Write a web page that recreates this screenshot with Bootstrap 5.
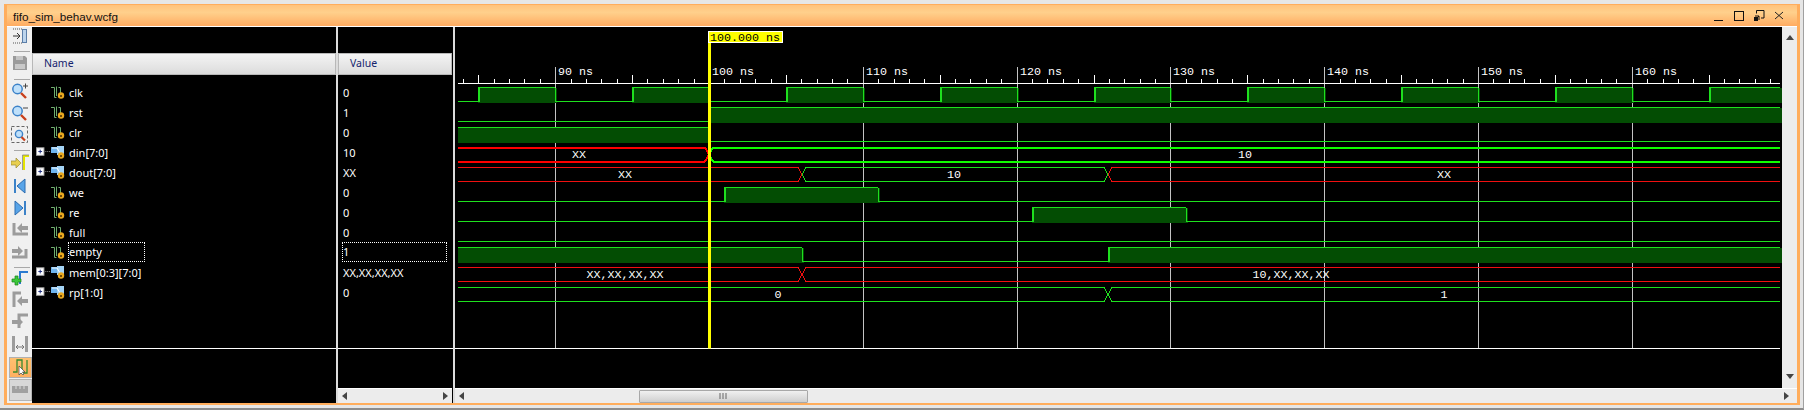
<!DOCTYPE html>
<html lang="en">

<head>
  <meta charset="UTF-8">
  <title>fifo_sim_behav.wcfg</title>
  <link href="https://cdn.jsdelivr.net/npm/bootstrap@5.3.3/dist/css/bootstrap.min.css" rel="stylesheet">
  <style>
    body { background: #e6e6e6; height: 410px; overflow: hidden; padding: 4px 3px 3px 4px; font: 11px "Noto Sans", "Liberation Sans", sans-serif; border-right: 1px solid #a0a0a0; border-bottom: 2px solid #8c8c8c; }
    .tool-win { height: 401px; border: solid #ffad5c; border-width: 1px 3px 2px 3px; }
    .title-bar { height: 21px; padding: 1px 12px 0 6px; color: #111; font: 11.7px "Liberation Sans", sans-serif; border-bottom: 1px solid #fff; background: linear-gradient(#ffc27c, #ffd08c 35%, #ffac62); box-sizing: content-box; }
    .title-ctl { gap: 8px; }
    .main-area { height: 376px; }
    .side-tools { width: 25px; background: #f0f0f0; }
    .tool-btn { height: 22.3px; }
    .tool-btn.short { height: 20px; }
    .tool-btn svg { display: block; margin: auto; }
    .tool-sep { height: 4px; padding-top: 1px; }
    .tool-sep.wide { height: 6px; padding-top: 2px; }
    .tool-sep::before { content: ""; display: block; margin: 0 2px 0 7px; height: 1px; background: #a8a8a8; }
    .tool-on { height: 21px; margin: 0 0 1px 2px; background: linear-gradient(#ffc070, #ffb060); border: 1px solid #b0b0b0; }
    .tool-off { height: 22px; margin-left: 2px; background: #d8d8d8; border: 1px solid #b4b4b4; }
    .name-col { width: 304px; background: #000; }
    .value-col { width: 115px; background: #000; }
    .split-bar { width: 2px; background: #dcdcdc; }
    .top-gap { height: 26px; }
    .head-cell { height: 22px; padding-bottom: 2px; background: linear-gradient(#f4f4f4, #dcdcdc); border: 1px solid #b8b8b8; color: #14246e; font-size: 10.5px; }
    .name-col .head-cell { padding-left: 11px; }
    .value-col .head-cell { padding-left: 11px; margin-right: 1px; }
    .rows-box { height: 274px; padding-top: 7px; border-bottom: 1px solid #fff; color: #fff; }
    .sig-row { height: 20px; }
    .name-col .sig-row { padding-left: 4px; }
    .value-col .sig-row { padding-left: 5px; }
    .tree-gap { width: 15px; }
    .sig-focus { border: 1px dotted #fff; height: 20px; line-height: 18px; }
    .name-col .sig-focus { width: 77px; margin-left: -1px; }
    .value-col .sig-focus { width: 105px; margin-left: -1px; padding-left: 0; }
    .wave-box { width: 1327px; height: 361px; background: #000; }
    .wave-box svg { display: block; }
    .v-scroll { width: 15px; background: #ececec; }
    .h-scroll { height: 15px; background: #ececec; border-top: 1px solid #fff; }
    .value-scroll { margin-top: auto; margin-right: 1px; }
    .scroll-thumb { width: 169px; height: 13px; margin-left: 174px; border: 1px solid #a8a8a8; border-radius: 1px; background: linear-gradient(#f0f0f0, #cfcfcf); }
    .wave-text { font: 11.67px "Liberation Mono", monospace; fill: #fff; }
  </style>
</head>

<body>
  <!-- iconos -->
  <svg width="0" height="0" class="d-block">
    <defs>
      <symbol id="ic-bit" viewBox="0 0 14 14">
        <path d="M0 2.500H3.500V12.500H5.500M5.500 1.500V11M7.500 2.500H9.500V8" fill="none" stroke="#6fae6f"/>
        <circle cx="10" cy="10.500" r="3.200" fill="#e8a820"/>
        <rect x="9" y="10" width="2" height="2" fill="#6b4a08"/>
      </symbol>
      <symbol id="ic-bus" viewBox="0 0 14 14">
        <rect x="0" y="2" width="6" height="6" fill="#6fb4ee"/>
        <rect x="6" y="1" width="7" height="9" fill="#a4d4f6"/>
        <path d="M1 3H6L9 8" stroke="#fff" fill="none"/>
        <circle cx="10" cy="10.500" r="3.200" fill="#e8a820"/>
        <rect x="9" y="10" width="2" height="2" fill="#6b4a08"/>
      </symbol>
      <symbol id="ic-plus" viewBox="0 0 16 10">
        <rect x=".5" y=".5" width="8" height="8" fill="#fff" stroke="#a4a4a4"/>
        <path d="M2.500 4.500H6.500M4.500 2.500V6.500" stroke="#1a2a7a"/>
        <path d="M10 4.500H16" stroke="#999" stroke-dasharray="1 1"/>
      </symbol>
    </defs>
  </svg>

  <div class="tool-win d-flex flex-column">
    <div class="title-bar d-flex align-items-center justify-content-between">
      <span>fifo_sim_behav.wcfg</span>
      <div class="title-ctl d-flex align-items-center">
        <svg width="12" height="12" viewBox="0 0 12 12"><path d="M1 10.500H10" stroke="#111" stroke-width="1"/></svg>
        <svg width="12" height="12" viewBox="0 0 12 12"><rect x="1.500" y="1.500" width="9" height="9" fill="none" stroke="#111"/></svg>
        <svg width="12" height="12" viewBox="0 0 12 12"><path d="M3.500 3.500V.5H11V8H8M1 11L6 6M2 6H6V10" fill="none" stroke="#111"/><rect x="1" y="7" width="4" height="4" fill="#111"/></svg>
        <svg width="12" height="12" viewBox="0 0 12 12"><path d="M2 2L10 9M10 2L2 9" stroke="#222"/></svg>
      </div>
    </div>

    <div class="main-area d-flex">
      <!-- barra de herramientas -->
      <div class="side-tools d-flex flex-column">
        <div class="tool-btn"><svg width="16" height="18" viewBox="0 0 16 18"><path d="M1 2H10M1 16H10" stroke="#555" stroke-dasharray="1 1"/><path d="M1 9H7M5 6L8 9L5 12" stroke="#333" fill="none"/><rect x="10.500" y="2.500" width="4" height="13" fill="#bcd4ec" stroke="#5b7ea8"/></svg></div>
        <div class="tool-sep wide"></div>
        <div class="tool-btn"><svg width="16" height="16" viewBox="0 0 16 16"><path d="M1 1H13L15 3V15H1Z" fill="#9a9a9a"/><rect x="4" y="1" width="7" height="4" fill="#c4c4c4"/><rect x="3" y="9" width="10" height="5" fill="#c8c8c8"/></svg></div>
        <div class="tool-sep"></div>
        <div class="tool-btn"><svg width="18" height="18" viewBox="0 0 18 18"><circle cx="6.500" cy="7" r="4.700" fill="#bfe0fa" stroke="#3c82c8" stroke-width="1.500"/><path d="M10 11L15 16" stroke="#c8401c" stroke-width="2.400"/><path d="M12 4H17M14.500 1.500V6.500" stroke="#444"/></svg></div>
        <div class="tool-btn"><svg width="18" height="18" viewBox="0 0 18 18"><circle cx="6.500" cy="7" r="4.700" fill="#bfe0fa" stroke="#3c82c8" stroke-width="1.500"/><path d="M10 11L15 16" stroke="#c8401c" stroke-width="2.400"/><path d="M12 4H17" stroke="#444"/></svg></div>
        <div class="tool-btn"><svg width="18" height="18" viewBox="0 0 18 18"><rect x=".5" y=".5" width="16" height="16" fill="none" stroke="#666" stroke-dasharray="3 2"/><circle cx="8" cy="8" r="3.600" fill="#bfe0fa" stroke="#3c82c8" stroke-width="1.400"/><path d="M10.500 11L14 14.500" stroke="#c8401c" stroke-width="2.200"/></svg></div>
        <div class="tool-sep wide"></div>
        <div class="tool-btn"><svg width="18" height="18" viewBox="0 0 18 18"><path d="M0 7H5V4L10 9L5 14V11H0Z" fill="#e8cf50" stroke="#9a8a30" stroke-width=".7"/><path d="M13 16V2H18" fill="none" stroke="#e4e400" stroke-width="2"/><path d="M11.500 16V1H18" fill="none" stroke="#777" stroke-width=".7"/></svg></div>
        <div class="tool-btn"><svg width="14" height="18" viewBox="0 0 14 18"><rect x="1" y="2" width="2" height="14" fill="#3c82c8"/><path d="M12 2V16L4 9Z" fill="#58a4e8" stroke="#2c6cb0"/></svg></div>
        <div class="tool-btn"><svg width="14" height="18" viewBox="0 0 14 18"><rect x="11" y="2" width="2" height="14" fill="#3c82c8"/><path d="M2 2V16L10 9Z" fill="#58a4e8" stroke="#2c6cb0"/></svg></div>
        <div class="tool-btn"><svg width="18" height="16" viewBox="0 0 18 16"><path d="M3 2V13H17" fill="none" stroke="#9c9c9c" stroke-width="3"/><path d="M6 7L11 2V5H17V9H11V12Z" fill="#9c9c9c"/></svg></div>
        <div class="tool-btn"><svg width="18" height="16" viewBox="0 0 18 16"><path d="M15 5V13H1" fill="none" stroke="#9c9c9c" stroke-width="3"/><path d="M12 7L7 2V5H1V9H7V12Z" fill="#9c9c9c"/></svg></div>
        <div class="tool-sep"></div>
        <div class="tool-btn short"><svg width="18" height="18" viewBox="0 0 18 18"><path d="M9 14V2H17" fill="none" stroke="#2a7ad0" stroke-width="2"/><path d="M4 6H7V9H10V12H7V15H4V12H1V9H4Z" fill="#3cc83c" stroke="#148214" stroke-width=".7"/></svg></div>
        <div class="tool-btn"><svg width="18" height="18" viewBox="0 0 18 18"><path d="M3 17V3H10" fill="none" stroke="#9c9c9c" stroke-width="3"/><path d="M6 11L11 6V9H17V13H11V16Z" fill="#9c9c9c"/></svg></div>
        <div class="tool-btn"><svg width="18" height="18" viewBox="0 0 18 18"><path d="M8 16V3H17" fill="none" stroke="#9c9c9c" stroke-width="3"/><path d="M12 10L7 5V8H1V12H7V15Z" fill="#9c9c9c"/></svg></div>
        <div class="tool-btn"><svg width="18" height="18" viewBox="0 0 18 18"><rect x="1" y="1" width="3" height="16" fill="#9c9c9c"/><rect x="14" y="1" width="3" height="16" fill="#9c9c9c"/><path d="M5 12H13M7 10L5 12L7 14M11 10L13 12L11 14" fill="none" stroke="#777"/></svg></div>
        <div class="tool-on d-flex align-items-center justify-content-center"><svg width="18" height="18" viewBox="0 0 18 18"><path d="M1 14H5V2H10V15H15V2" fill="none" stroke="#3a8a30" stroke-width="1.300"/><path d="M7 8V17L9 15L11 17L12 16L10.500 14H13Z" fill="#fff" stroke="#444" stroke-width=".7"/></svg></div>
        <div class="tool-off d-flex align-items-center justify-content-center"><svg width="18" height="10" viewBox="0 0 18 10"><rect y="1" width="16" height="7" fill="#a0a0a0"/><path d="M4 1V4M8 1V4M12 1V4" stroke="#dcdcdc"/></svg></div>
      </div>

      <!-- columna de nombres -->
      <div class="name-col d-flex flex-column">
        <div class="top-gap"></div>
        <div class="head-cell d-flex align-items-center">Name</div>
        <div class="rows-box">
          <div class="sig-row d-flex align-items-center"><span class="tree-gap"></span><svg width="14" height="14" class="me-1"><use href="#ic-bit"/></svg>clk</div>
          <div class="sig-row d-flex align-items-center"><span class="tree-gap"></span><svg width="14" height="14" class="me-1"><use href="#ic-bit"/></svg>rst</div>
          <div class="sig-row d-flex align-items-center"><span class="tree-gap"></span><svg width="14" height="14" class="me-1"><use href="#ic-bit"/></svg>clr</div>
          <div class="sig-row d-flex align-items-center"><svg width="15" height="10"><use href="#ic-plus"/></svg><svg width="14" height="14" class="me-1"><use href="#ic-bus"/></svg>din[7:0]</div>
          <div class="sig-row d-flex align-items-center"><svg width="15" height="10"><use href="#ic-plus"/></svg><svg width="14" height="14" class="me-1"><use href="#ic-bus"/></svg>dout[7:0]</div>
          <div class="sig-row d-flex align-items-center"><span class="tree-gap"></span><svg width="14" height="14" class="me-1"><use href="#ic-bit"/></svg>we</div>
          <div class="sig-row d-flex align-items-center"><span class="tree-gap"></span><svg width="14" height="14" class="me-1"><use href="#ic-bit"/></svg>re</div>
          <div class="sig-row d-flex align-items-center"><span class="tree-gap"></span><svg width="14" height="14" class="me-1"><use href="#ic-bit"/></svg>full</div>
          <div class="sig-row d-flex align-items-center"><span class="tree-gap"></span><svg width="14" height="14" class="me-1"><use href="#ic-bit"/></svg><span class="sig-focus">empty</span></div>
          <div class="sig-row d-flex align-items-center"><svg width="15" height="10"><use href="#ic-plus"/></svg><svg width="14" height="14" class="me-1"><use href="#ic-bus"/></svg>mem[0:3][7:0]</div>
          <div class="sig-row d-flex align-items-center"><svg width="15" height="10"><use href="#ic-plus"/></svg><svg width="14" height="14" class="me-1"><use href="#ic-bus"/></svg>rp[1:0]</div>
        </div>
      </div>
      <div class="split-bar"></div>

      <!-- columna de valores -->
      <div class="value-col d-flex flex-column">
        <div class="top-gap"></div>
        <div class="head-cell d-flex align-items-center">Value</div>
        <div class="rows-box">
          <div class="sig-row d-flex align-items-center">0</div>
          <div class="sig-row d-flex align-items-center">1</div>
          <div class="sig-row d-flex align-items-center">0</div>
          <div class="sig-row d-flex align-items-center">10</div>
          <div class="sig-row d-flex align-items-center">XX</div>
          <div class="sig-row d-flex align-items-center">0</div>
          <div class="sig-row d-flex align-items-center">0</div>
          <div class="sig-row d-flex align-items-center">0</div>
          <div class="sig-row d-flex align-items-center"><span class="sig-focus">1</span></div>
          <div class="sig-row d-flex align-items-center">XX,XX,XX,XX</div>
          <div class="sig-row d-flex align-items-center">0</div>
        </div>
        <div class="h-scroll value-scroll d-flex align-items-center justify-content-between px-1">
          <svg width="6" height="8"><path d="M5 0V8L0 4Z" fill="#444"/></svg>
          <svg width="6" height="8"><path d="M1 0V8L6 4Z" fill="#444"/></svg>
        </div>
      </div>
      <div class="split-bar"></div>

      <!-- ondas -->
      <div class="d-flex flex-column">
        <div class="d-flex">
          <div class="wave-box"><svg id="ondas" width="1327" height="361" viewBox="455 27 1327 361"></svg></div>
          <div class="v-scroll d-flex flex-column justify-content-between align-items-center py-1">
            <svg width="8" height="6" class="mt-1"><path d="M0 5H8L4 0Z" fill="#444"/></svg>
            <svg width="8" height="6" class="mb-1"><path d="M0 0H8L4 5Z" fill="#444"/></svg>
          </div>
        </div>
        <div class="h-scroll d-flex align-items-center px-1">
          <svg width="6" height="8" class="flex-shrink-0"><path d="M5 0V8L0 4Z" fill="#444"/></svg>
          <div class="scroll-thumb d-flex align-items-center justify-content-center flex-shrink-0">
            <svg width="9" height="8"><path d="M1 1V7M4 1V7M7 1V7" stroke="#666"/></svg>
          </div>
          <svg width="6" height="8" class="ms-auto me-1 flex-shrink-0"><path d="M1 0V8L6 4Z" fill="#444"/></svg>
        </div>
      </div>
    </div>
  </div>

  <script>
    const FIN = 1780, INICIO = 458;
    const VERDE = "#1ee01e", ROJO = "#f01010", RELLENO = "#034d03";
    let svg = "";

    function X(t) { return Math.round(709 + (t - 100) * 15.38); }
    function linea(d, color, ancho) {
      svg += `<path d="${d}" stroke="${color}" stroke-width="${ancho || 1}" fill="none" shape-rendering="crispEdges"/>`;
    }
    function texto(x, y, s, extra) {
      svg += `<text class="wave-text" x="${x}" y="${y}" ${extra || 'text-anchor="middle"'}>${s}</text>`;
    }

    // señal de un bit: altos = lista de [x0, x1]
    function bit(fila, altos) {
      const hi = 87 + 20 * fila + .5, lo = hi + 14;
      altos.forEach(a => {
        svg += `<rect x="${a[0]}" y="${hi}" width="${a[1] - a[0] + 2}" height="15.500" fill="${RELLENO}" shape-rendering="crispEdges"/>`;
      });
      let x = INICIO;
      altos.forEach(a => {
        if (a[0] > x) linea(`M${x} ${lo}H${a[0]}`, VERDE);
        linea(`M${a[0]} ${hi}H${a[1]}`, VERDE);
        if (a[0] > INICIO) linea(`M${a[0] + .5} ${hi}V${lo}M${a[0] + 1.5} ${hi}V${lo}`, VERDE);
        if (a[1] < FIN) linea(`M${a[1] + .5} ${hi}V${lo}`, VERDE);
        x = a[1];
      });
      if (x < FIN) linea(`M${x} ${lo}H${FIN}`, VERDE);
    }

    // bus: tramos = lista de [x0, x1, color]
    function bus(fila, tramos, ancho) {
      const hi = 87 + 20 * fila + .5, lo = hi + 14, mid = hi + 7;
      tramos.forEach(s => {
        const a = s[0] > INICIO ? s[0] + 4 : s[0], b = s[1] < FIN ? s[1] - 4 : s[1];
        linea(`M${a} ${hi}H${b}M${a} ${lo}H${b}`, s[2], ancho);
        if (s[0] > INICIO) linea(`M${s[0]} ${mid}L${a} ${hi}M${s[0]} ${mid}L${a} ${lo}`, s[2], ancho);
        if (s[1] < FIN) linea(`M${b} ${hi}L${s[1]} ${mid}M${b} ${lo}L${s[1]} ${mid}`, s[2], ancho);
      });
    }

    // rejilla y regla
    for (let t = 90; t <= 160; t += 10) linea(`M${X(t) + .5} 67V348`, "#c4c4c4");
    linea(`M${INICIO} 83.500H${FIN}`, "#fff");
    for (let t = 84; t <= 169; t++) {
      const alto = t % 10 === 0 ? 0 : t % 5 === 0 ? 8 : 4;
      if (alto) linea(`M${X(t) + .5} ${83 - alto}V83`, "#fff");
    }
    for (let t = 90; t <= 160; t += 10) texto(X(t) + 3, 75, t + " ns", 'text-anchor="start"');
    linea(`M455 348.500H${FIN}`, "#fff");

    // ondas
    const reloj = [];
    for (let t = 85; t < 165; t += 10) reloj.push([X(t), X(t + 5)]);
    reloj.push([X(165), FIN]);
    bit(0, reloj);
    bit(1, [[X(100), FIN]]);
    bit(2, [[INICIO, X(100)]]);
    bus(3, [[INICIO, 709, "#ff0000"], [709, FIN, "#10ff00"]], 2);
    bus(4, [[INICIO, 802, ROJO], [802, 1108, VERDE], [1108, FIN, ROJO]]);
    bit(5, [[X(101), X(111)]]);
    bit(6, [[X(121), X(131)]]);
    bit(7, []);
    bit(8, [[INICIO, 802], [1108, FIN]]);
    bus(9, [[INICIO, 802, ROJO], [802, FIN, ROJO]]);
    bus(10, [[INICIO, 1108, VERDE], [1108, FIN, VERDE]]);

    texto(579, 158, "XX");
    texto(1245, 158, "10");
    texto(625, 178, "XX");
    texto(954, 178, "10");
    texto(1444, 178, "XX");
    texto(625, 278, "XX,XX,XX,XX");
    texto(1291, 278, "10,XX,XX,XX");
    texto(778, 298, "0");
    texto(1444, 298, "1");

    // cursor
    svg += `<rect x="708" y="42" width="3" height="306.500" fill="#ffff00"/>`;
    svg += `<rect x="708.500" y="31.500" width="74" height="11" fill="#ffff00" stroke="#fff"/>`;
    svg += `<text class="wave-text" x="710" y="41" style="fill:#000">100.000 ns</text>`;

    document.getElementById("ondas").innerHTML = svg;
  </script>
  <script src="https://cdn.jsdelivr.net/npm/bootstrap@5.3.3/dist/js/bootstrap.bundle.min.js"></script>
</body>

</html>
